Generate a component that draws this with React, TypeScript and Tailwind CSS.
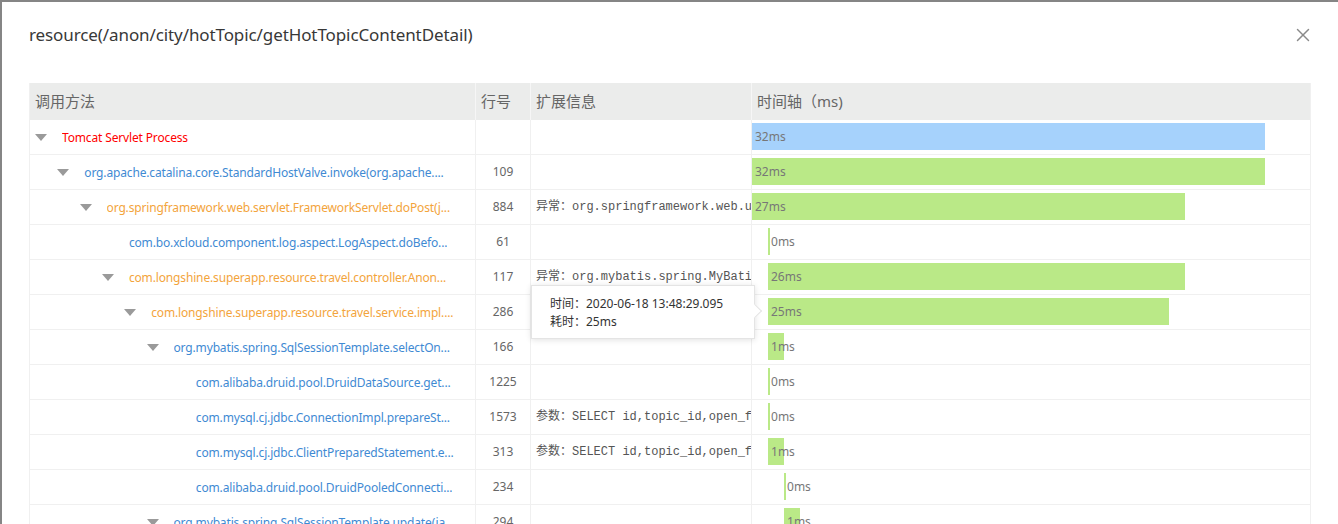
import { X } from "lucide-react";

type Row = {
  level: number;
  expand: boolean;
  color: "red" | "blue" | "orange";
  name: string;
  line: string;
  ext: string;
  start: number;
  ms: number;
};

const rows: Row[] = [
  { level: 0, expand: true, color: "red", name: "Tomcat Servlet Process", line: "", ext: "", start: 0, ms: 32 },
  { level: 1, expand: true, color: "blue", name: "org.apache.catalina.core.StandardHostValve.invoke(org.apache....", line: "109", ext: "", start: 0, ms: 32 },
  { level: 2, expand: true, color: "orange", name: "org.springframework.web.servlet.FrameworkServlet.doPost(j...", line: "884", ext: "异常：org.springframework.web.util.NestedServletException", start: 0, ms: 27 },
  { level: 3, expand: false, color: "blue", name: "com.bo.xcloud.component.log.aspect.LogAspect.doBefo...", line: "61", ext: "", start: 1, ms: 0 },
  { level: 3, expand: true, color: "orange", name: "com.longshine.superapp.resource.travel.controller.Anon...", line: "117", ext: "异常：org.mybatis.spring.MyBatisSystemException", start: 1, ms: 26 },
  { level: 4, expand: true, color: "orange", name: "com.longshine.superapp.resource.travel.service.impl....", line: "286", ext: "", start: 1, ms: 25 },
  { level: 5, expand: true, color: "blue", name: "org.mybatis.spring.SqlSessionTemplate.selectOn...", line: "166", ext: "", start: 1, ms: 1 },
  { level: 6, expand: false, color: "blue", name: "com.alibaba.druid.pool.DruidDataSource.get...", line: "1225", ext: "", start: 1, ms: 0 },
  { level: 6, expand: false, color: "blue", name: "com.mysql.cj.jdbc.ConnectionImpl.prepareSt...", line: "1573", ext: "参数：SELECT id,topic_id,open_flag FROM hot_topic", start: 1, ms: 0 },
  { level: 6, expand: false, color: "blue", name: "com.mysql.cj.jdbc.ClientPreparedStatement.e...", line: "313", ext: "参数：SELECT id,topic_id,open_flag FROM hot_topic", start: 1, ms: 1 },
  { level: 6, expand: false, color: "blue", name: "com.alibaba.druid.pool.DruidPooledConnecti...", line: "234", ext: "", start: 2, ms: 0 },
  { level: 5, expand: true, color: "blue", name: "org.mybatis.spring.SqlSessionTemplate.update(ja...", line: "294", ext: "", start: 2, ms: 1 },
];

const nameColor = {
  red: "text-[#ff0000]",
  blue: "text-[#3f8ad3]",
  orange: "text-[#f3a43c]",
};

const PX_PER_MS = 16.03;

const Caret = () => (
  <svg width="12" height="7" viewBox="0 0 12 7" className="shrink-0">
    <path d="M0 0 L12 0 L6 7 Z" fill="#9a9a9a" />
  </svg>
);

const App = () => {
  return (
    <div className="h-[524px] w-[1338px] overflow-hidden bg-[#858585] pt-[2px] pl-[2px]">
      <div
        className="h-full bg-white px-[27px]"
        style={{ fontFamily: '"Noto Sans", "Noto Sans CJK SC", sans-serif' }}
      >
        <div className="flex h-[68px] items-center justify-between pb-[2px]">
          <h1 className="text-[17px] tracking-[-0.1px] text-[#383838]">
            resource(/anon/city/hotTopic/getHotTopicContentDetail)
          </h1>
          <X size={22} strokeWidth={1.6} className="mr-[-3px] text-[#8a8a8a]" />
        </div>

        <div className="relative mt-[13px] border-x border-[#f0f0f0]">
          {/* header */}
          <div className="grid h-[37px] grid-cols-[446px_55px_221px_1fr] bg-[#ebeceb] text-[15px] text-[#666]">
            <div className="flex items-center border-r border-[#f6f6f6] pl-[5px]">调用方法</div>
            <div className="flex items-center border-r border-[#f6f6f6] pl-[5px]">行号</div>
            <div className="flex items-center border-r border-[#f6f6f6] pl-[5px]">扩展信息</div>
            <div className="flex items-center pl-[5px]">时间轴（ms)</div>
          </div>

          {rows.map((row, i) => (
            <div
              key={i}
              className="grid h-[35px] grid-cols-[446px_55px_221px_1fr] border-b border-[#f0f0f0] text-[12px]"
            >
              <div
                className="flex items-center overflow-hidden border-r border-[#f0f0f0] pr-[6px] pt-[2px]"
                style={{ paddingLeft: 5 + row.level * 22.3 }}
              >
                <span className="flex w-[27px] shrink-0 items-center pb-[2px]">
                  {row.expand && <Caret />}
                </span>
                <span className={`truncate tracking-[-0.15px] ${nameColor[row.color]}`}>{row.name}</span>
              </div>
              <div className="flex items-center justify-center border-r border-[#f0f0f0] text-[#666]">
                {row.line}
              </div>
              <div
                className="flex items-center overflow-hidden whitespace-nowrap border-r border-[#f0f0f0] pl-[5px] text-[#555]"
                style={{ fontFamily: '"Liberation Mono", "Noto Sans CJK SC", monospace' }}
              >
                {row.ext}
              </div>
              <div className="relative pt-[3px]">
                <div
                  className={`h-[27px] ${i === 0 ? "bg-[#a6d2fc]" : "bg-[#bae987]"}`}
                  style={{
                    marginLeft: row.start * 16,
                    width: Math.max(2, Math.round(row.ms * PX_PER_MS)),
                  }}
                >
                  <span className="block whitespace-nowrap pl-[3px] text-[12px] leading-[27px] text-[#777]">
                    {row.ms}ms
                  </span>
                </div>
              </div>
            </div>
          ))}

          {/* tooltip */}
          <div className="absolute left-[501px] top-[202px] h-[54px] w-[224px] border border-[#e4e4e4] bg-white pl-[18px] pt-[9px] text-[12px] leading-[18px] text-[#333] shadow-[0_1px_6px_rgba(0,0,0,0.12)]">
            <div>时间：2020-06-18 13:48:29.095</div>
            <div>耗时：25ms</div>
            <div className="absolute right-[-6px] top-[20px] h-[10px] w-[10px] rotate-45 border-r border-t border-[#e4e4e4] bg-white" />
          </div>
        </div>
      </div>
    </div>
  );
};

export default App;
